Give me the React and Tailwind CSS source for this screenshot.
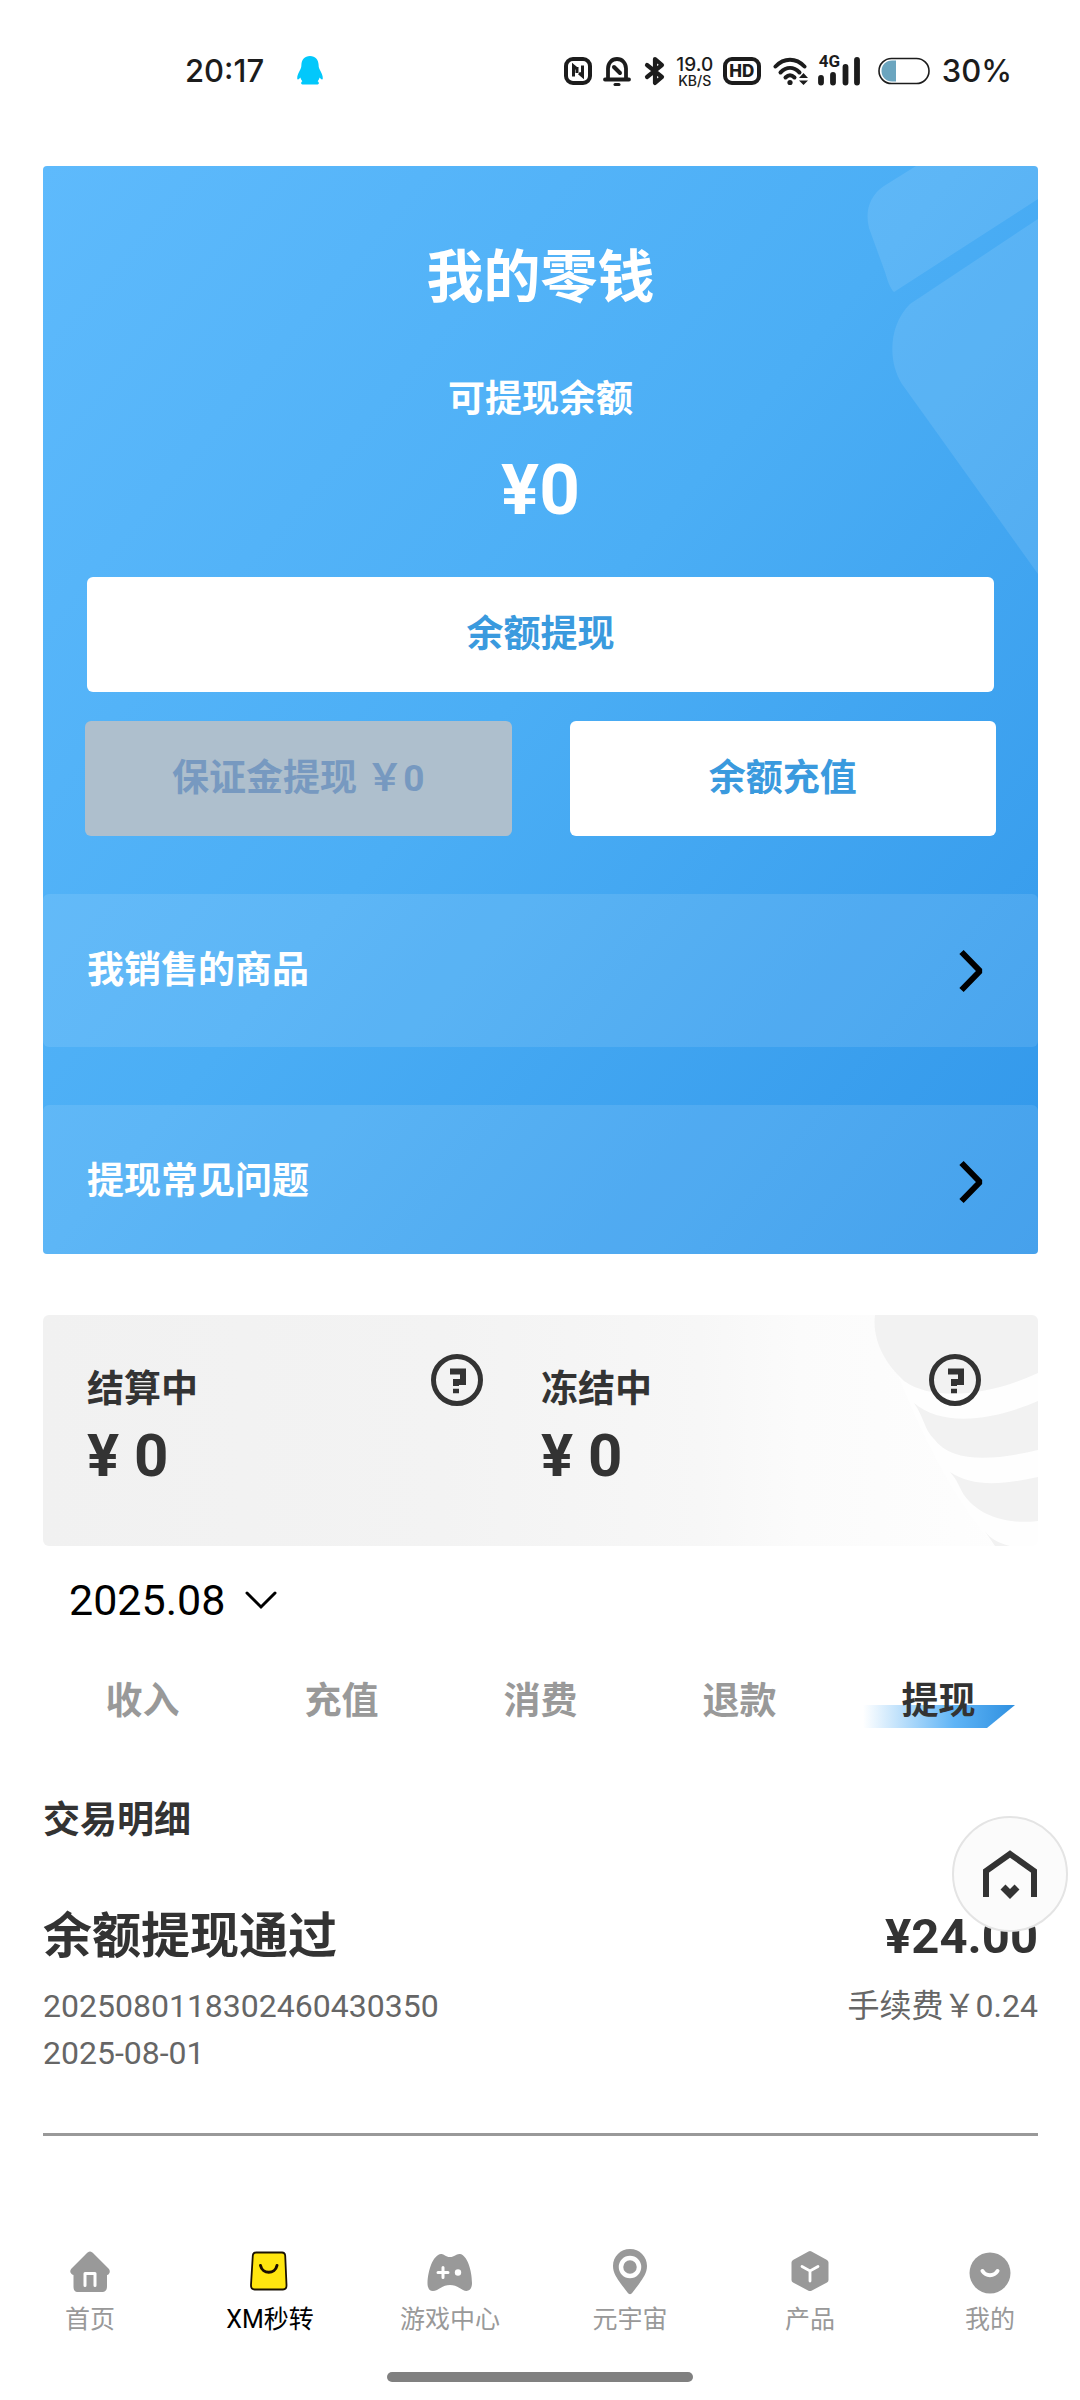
import React from "react";

const INK = "#1c1c1c";

function Penguin() {
  return (
    <svg className="h-8 w-7" viewBox="0 0 28 32" fill="#02c8fb">
      <path d="M14 1C8.600 1 5.600 4.800 5.400 9.800C5.300 12 5.200 12.600 4.300 14.600C2.800 17.800 1 20.600 1.200 23.600C1.400 25.400 3 24.600 4.300 22.600C4.800 24 5.400 25.200 6.300 26.200C4.800 27 4.600 29.300 6.400 29.600H21.600C23.400 29.300 23.200 27 21.700 26.200C22.600 25.200 23.200 24 23.700 22.600C25 24.600 26.600 25.400 26.800 23.600C27 20.600 25.200 17.800 23.700 14.600C22.800 12.600 22.700 12 22.600 9.800C22.400 4.800 19.400 1 14 1Z" />
    </svg>
  );
}

function StatusBar() {
  return (
    <header className="flex h-[142px] items-center justify-between pr-[68px] pl-[185px] text-[#1c1c1c]">
      <div className="flex items-center gap-8">
        <span className="font-['Inter'] text-[31px] leading-10 font-medium">20:17</span>
        <Penguin />
      </div>
      <div className="flex items-center">
        <svg className="h-8 w-7" viewBox="0 0 28 32" fill="none" stroke={INK}>
          <rect x="2" y="4" width="24" height="24" rx="7" strokeWidth="4" />
          <path d="M9.500 21.500V11L13 14M18.500 10.500V21L15 18M13 12V18" strokeWidth="3" />
        </svg>
        <svg className="ml-[11px] h-8 w-7" viewBox="0 0 28 32" fill="none" stroke={INK} strokeLinecap="round" strokeLinejoin="round">
          <path d="M2 24.500H26M5 24V13.500C5 8 8.800 4 14 4C19.200 4 23 8 23 13.500V24" strokeWidth="3.800" />
          <path d="M11 12L17 18" strokeWidth="4" />
          <path d="M12 29.500H16" strokeWidth="3" />
        </svg>
        <svg className="ml-3 h-8 w-6" viewBox="0 0 24 32" fill="none" stroke={INK} strokeWidth="4.200" strokeLinecap="round" strokeLinejoin="round">
          <path d="M4 10L19 22L12 28V4L19 10L4 22" />
        </svg>
        <div className="ml-2 flex w-10 flex-col items-center font-['Inter'] font-medium">
          <span className="text-[19px] leading-[19px]">19.0</span>
          <span className="text-[14px] leading-[14px]">KB/S</span>
        </div>
        <div className="ml-2 flex h-7 w-[38px] items-center justify-center rounded-[9px] border-4 border-[#1c1c1c] font-['Inter'] text-[17px] leading-4 font-extrabold">
          HD
        </div>
        <svg className="ml-3 h-8 w-9" viewBox="0 0 36 32" fill="none" stroke={INK} strokeLinecap="round">
          <path d="M2.500 11.500C11 2.500 23 2.500 31.500 11.500" strokeWidth="4" />
          <path d="M7.500 17.500C13.500 11.500 20.500 11.500 26.500 17.500" strokeWidth="4" />
          <path d="M12.500 22.500C15.500 19.500 18.500 19.500 21.500 22.500" strokeWidth="4" />
          <circle cx="17" cy="27.500" r="2.600" fill={INK} stroke="none" />
          <path d="M30.500 18L35 23H26ZM30.500 30L35 25.500H26Z" fill={INK} stroke="none" />
        </svg>
        <div className="relative ml-2 h-8 w-11">
          <svg className="h-8 w-11" viewBox="0 0 44 32" stroke={INK} strokeWidth="5.800" strokeLinecap="round">
            <path d="M4 23V27.500M16 20V27.500M28.500 12V27.500M40 5V27.500" />
          </svg>
          <span className="absolute -top-1 left-0.5 font-['Roboto'] text-[17px] leading-5 font-bold">4G</span>
        </div>
        <svg className="ml-[17px] h-8 w-[52px]" viewBox="0 0 52 32">
          <path d="M18 5.500H14C8 5.500 3.500 10 3.500 16S8 26.500 14 26.500H18Z" fill="#6ba5bf" />
          <rect x="1" y="3.500" width="50" height="25" rx="12.500" fill="none" stroke={INK} strokeWidth="1.600" />
        </svg>
        <span className="ml-3 font-['Inter'] text-[31px] leading-10 font-medium">30%</span>
      </div>
    </header>
  );
}

function LinkRow({ children }) {
  return (
    <a href="#" className="flex items-center justify-between rounded-md bg-white/10 pr-[52px] pl-11 text-[37px] leading-[52px] font-bold text-white">
      {children}
      <svg className="h-11 w-7" viewBox="0 0 28 44" fill="none" stroke="#000" strokeWidth="6">
        <path d="M3.500 3L22 22L3.500 41" strokeLinejoin="bevel" />
      </svg>
    </a>
  );
}

function WalletCard() {
  return (
    <section className="relative overflow-hidden rounded-sm bg-linear-[130deg,#5ebafc_0%,#4baef5_48%,#3197ea_100%]">
      <svg className="absolute top-0 right-0 h-[410px] w-[172px] fill-white/10" viewBox="0 0 172 410">
        <path d="M67 0H172V33L28 126C24 122 22 116 19 106L3 62C-1 46 3 30 18 20L50 0Z" />
        <path d="M172 53V408L36 218C22 196 22 160 44 138Z" />
      </svg>
      <div className="relative flex flex-col">
        <h1 className="pt-[72px] text-center text-[57px] leading-[80px] font-bold text-white">我的零钱</h1>
        <p className="mt-14 text-center text-[37px] leading-[52px] font-bold text-white">可提现余额</p>
        <p className="mt-3.5 text-center text-[71px] leading-[100px] font-bold text-white">¥0</p>
        <div className="mt-[37px] flex flex-col gap-[29px] px-11 text-[37px] leading-[52px] font-bold text-[#3a9ade]">
          <button className="h-[115px] rounded-md bg-white">余额提现</button>
          <div className="-mx-0.5 grid grid-cols-2 gap-[58px]">
            <button className="h-[115px] rounded-md bg-[#aebfcd] text-[#7799c0]" disabled>
              保证金提现 ￥0
            </button>
            <button className="h-[115px] rounded-md bg-white">余额充值</button>
          </div>
        </div>
        <nav className="mt-[58px] -mb-1 grid auto-rows-[153px] gap-[58px]">
          <LinkRow>我销售的商品</LinkRow>
          <LinkRow>提现常见问题</LinkRow>
        </nav>
      </div>
    </section>
  );
}

function HelpButton() {
  return (
    <button aria-label="说明" className="size-[52px]">
      <svg className="size-[52px]" viewBox="0 0 52 52" fill="none" stroke="#333">
        <circle cx="26" cy="26" r="23.500" strokeWidth="5" />
        <path d="M19 17.500H32V28H25V32" strokeWidth="6" />
        <path d="M22 37H28" strokeWidth="4.500" />
      </svg>
    </button>
  );
}

function Stat({ label }) {
  return (
    <div className="flex items-start justify-between">
      <div className="pt-2.5">
        <p className="text-[37px] leading-[52px] font-bold">{label}</p>
        <p className="text-[60px] leading-[80px] font-bold">¥ 0</p>
      </div>
      <HelpButton />
    </div>
  );
}

function StatsCard() {
  return (
    <section className="relative mt-[61px] h-[231px] overflow-hidden rounded-md bg-linear-[90deg,#f1f1f1_0%,#f3f3f3_40%,#f7f7f7_66%,#fbfbfb_76%,#fefefe_100%] text-[#333]">
      <svg className="absolute top-0 right-0 h-[231px] w-[166px]" viewBox="0 0 166 231">
        <path d="M5 0H166V231H123C85 190 40 110 5 0Z" fill="#fefefe" />
        <g fill="#f2f2f2">
          <path d="M3 0H166V58C115 82 60 86 32 66C12 48 0 24 3 0Z" />
          <path d="M42 88C70 112 120 106 166 86V135C120 146 80 148 62 124C52 114 52 102 42 88Z" />
          <path d="M78 157C100 172 130 170 166 162V206C134 210 106 200 92 180C86 170 86 166 78 157Z" />
          <path d="M112 215C120 226 128 228 138 231H123Z" />
        </g>
      </svg>
      <div className="relative grid grid-cols-[396px_1fr] gap-[58px] pt-[39px] pr-[57px] pl-11">
        <Stat label="结算中" />
        <Stat label="冻结中" />
      </div>
    </section>
  );
}

const tabs = ["收入", "充值", "消费", "退款", "提现"];

function Tabs() {
  return (
    <div role="tablist" className="mt-11 grid grid-cols-5 text-[37px] leading-[52px] font-bold text-[#999]">
      {tabs.map((name) =>
        name === "提现" ? (
          <button key={name} role="tab" aria-selected="true" className="relative h-14 text-[#333]">
            <svg className="absolute bottom-0.5 left-1/2 h-[23px] w-[152px] -translate-x-1/2" viewBox="0 0 152 23">
              <defs>
                <linearGradient id="tab-mark">
                  <stop offset="0" stopColor="#5fb4f6" stopOpacity="0" />
                  <stop offset="0.600" stopColor="#5fb4f6" />
                  <stop offset="1" stopColor="#2f90e0" />
                </linearGradient>
              </defs>
              <path d="M0 0H152L124 23H0Z" fill="url(#tab-mark)" />
            </svg>
            <span className="relative">{name}</span>
          </button>
        ) : (
          <button key={name} role="tab" aria-selected="false" className="h-14">
            {name}
          </button>
        )
      )}
    </div>
  );
}

function Transactions() {
  return (
    <section className="mt-[65px] text-[#333]">
      <h2 className="text-[37px] leading-[52px] font-bold">交易明细</h2>
      <article className="mt-[54px] border-b-[3px] border-[#999] pb-14">
        <div className="flex items-center justify-between font-bold">
          <h3 className="text-[49px] leading-[72px]">余额提现通过</h3>
          <span className="text-[49px] leading-[72px]">¥24.00</span>
        </div>
        <div className="mt-2.5 flex justify-between text-[32px] leading-[47px] text-[#666]">
          <div>
            <p>2025080118302460430350</p>
            <p>2025-08-01</p>
          </div>
          <p>手续费￥0.24</p>
        </div>
      </article>
    </section>
  );
}

function NavItem({ label, active, children }) {
  return (
    <a href="#" className={active ? "flex flex-col items-center text-black" : "flex flex-col items-center text-[#999]"}>
      <svg className="size-12" viewBox="0 0 48 48" fill="#999">
        {children}
      </svg>
      <span className="mt-1.5 text-[25px] leading-9">{label}</span>
    </a>
  );
}

function BottomNav() {
  return (
    <nav className="grid grid-cols-6 bg-white">
      <NavItem label="首页">
        <path d="M24 3.500C25.500 3.500 26.500 4.500 27.500 5.500L42.500 20.500C45 23 43.500 26.500 41 27V38C41 42 39.500 44 35.500 44H12.500C8.500 44 7.500 42 7.500 38V27C4.500 26.500 3 23 5.500 20.500L20.500 5.500C21.500 4.500 22.500 3.500 24 3.500Z" />
        <path d="M19 37.500V25.500H29V37.500" fill="none" stroke="#fff" strokeWidth="3" strokeLinecap="round" strokeLinejoin="round" />
      </NavItem>
      <NavItem label="XM秒转" active>
        <path d="M10 4.500H36C38 4.500 39 5.500 39.200 7.500L40.500 37C40.600 40 39.500 41.500 37 41.500H8.500C6 41.500 5 40 5 37L6.800 7.500C7 5.500 8 4.500 10 4.500Z" fill="#ffe60f" stroke="#1a1204" strokeWidth="1.800" />
        <path d="M14.500 17.500C16.500 26.500 29 26.500 31 17.500" fill="none" stroke="#1a0d00" strokeWidth="3" strokeLinecap="round" />
      </NavItem>
      <NavItem label="游戏中心">
        <path d="M15 6C18 5.500 19 9 24 9S30 5.500 34 6C41 7 46 22 46 35C46 43 41 44 37 42C32 39 29 37 24 37S16 39 11 42C6 44.500 1.500 43 1.500 35C2 22 7 7 15 6Z" />
        <path d="M12 24.500H22M17 19.500V29.500" stroke="#fff" strokeWidth="3" strokeLinecap="round" />
        <circle cx="32" cy="24.500" r="3.200" fill="#fff" />
      </NavItem>
      <NavItem label="元宇宙">
        <path d="M24 1C33.500 1 41 8.500 41 18C41 25 37 30 33 36L26.500 44.500C24.800 46.700 23.200 46.700 21.500 44.500L15 36C11 30 7 25 7 18C7 8.500 14.500 1 24 1Z" />
        <circle cx="24" cy="19" r="9" stroke="#fff" strokeWidth="4.500" />
      </NavItem>
      <NavItem label="产品">
        <path d="M22.500 3.500Q24 2.500 25.500 3.500L41 12Q42.500 13 42.500 14.500V32Q42.500 33.500 41 34.500L25.500 42.700Q24 43.500 22.500 42.700L7 34.500Q5.500 33.500 5.500 32V14.500Q5.500 13 7 12Z" />
        <path d="M16 18.500L24 23L32 18.500M24 23V33" fill="none" stroke="#fff" strokeWidth="2.800" strokeLinecap="round" />
      </NavItem>
      <NavItem label="我的">
        <circle cx="24" cy="25" r="20.500" />
        <path d="M16.500 23C20 28.500 28 28.500 31.500 23" fill="none" stroke="#fff" strokeWidth="4" strokeLinecap="round" />
      </NavItem>
    </nav>
  );
}

export default function App() {
  return (
    <div className="relative flex min-h-screen flex-col bg-white font-['Roboto','Noto_Sans_CJK_SC',sans-serif]" lang="zh-CN">
      <StatusBar />
      <main className="mt-6 flex-1 pr-[42px] pl-[43px]">
        <WalletCard />
        <StatsCard />
        <button className="mt-6 ml-[26px] flex items-center gap-5 text-[43px] leading-[60px] text-black">
          2025.08
          <svg className="h-5 w-8" viewBox="0 0 32 20" fill="none" stroke="#000" strokeWidth="3" strokeLinecap="round">
            <path d="M2 3L16 17L30 3" />
          </svg>
        </button>
        <Tabs />
        <Transactions />
      </main>
      <button aria-label="返回首页" className="absolute top-[1816px] right-3 flex size-[116px] items-center justify-center rounded-full border-2 border-[#e4e4e4] bg-[#fbfbfb]">
        <svg className="size-14" viewBox="0 0 56 56" fill="none" stroke="#333" strokeWidth="6">
          <path d="M4 51V25L28 8L52 25V51" />
          <path d="M21 41L28 48L35 41" strokeWidth="7" />
        </svg>
      </button>
      <BottomNav />
      <div className="mx-auto mt-[34px] mb-[18px] h-2.5 w-[306px] rounded-full bg-[#808080]" />
    </div>
  );
}
